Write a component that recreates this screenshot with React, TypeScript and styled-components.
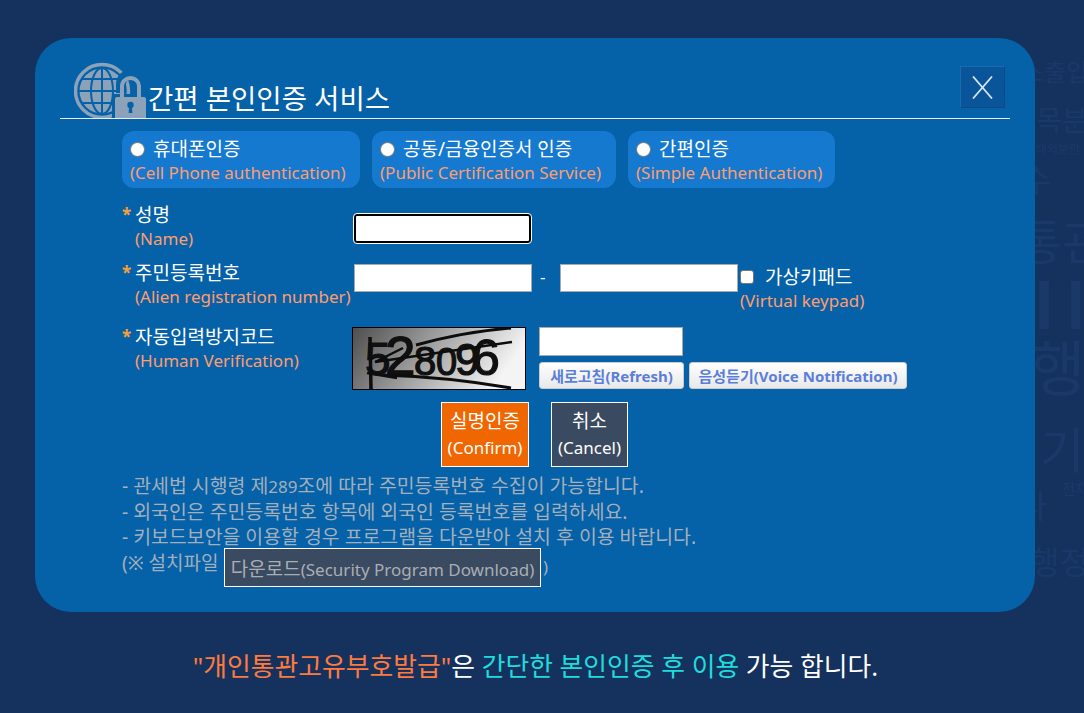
import React from "react";
import styled, { createGlobalStyle } from "styled-components";

const GlobalStyle = createGlobalStyle`
    html, body {
        margin: 0;
        padding: 0;
        height: 100%;
        background: #15325f;
        overflow: hidden;
        font-family: "Noto Sans", "Noto Sans CJK KR", sans-serif;
    }
`;

const ORANGE = "#ff9d6e";

const App: React.FC = () => (
    <>
        <GlobalStyle />
        <Page>
            <Watermark aria-hidden>
                <Faint size={24} top={60} left={1022}>스출입</Faint>
                <Faint size={28} top={106} left={1036}>목분</Faint>
                <Faint size={12} top={144} left={1036}>대외보안</Faint>
                <Faint size={32} top={164} left={1022}>수</Faint>
                <Faint size={48} top={218} left={1018}>통관</Faint>
                <Faint size={62} top={274} left={1035} bold>ll</Faint>
                <Faint size={60} top={338} left={1030}>행</Faint>
                <Faint size={48} top={426} left={1040}>기</Faint>
                <Faint size={14} top={482} left={1062}>전자</Faint>
                <Faint size={32} top={490} left={1018}>나</Faint>
                <Faint size={32} top={546} left={1030}>행정</Faint>
            </Watermark>
            <Modal>
                <Header>
                    <GlobeLock />
                    <Title>간편 본인인증 서비스</Title>
                    <CloseButton aria-label="close">
                        <svg width="21" height="23" viewBox="0 0 21 23">
                            <path d="M1 0.5 L20 22.5 M20 0.5 L1 22.5" stroke="#d6e2ee" strokeWidth="1.8" fill="none" />
                        </svg>
                    </CloseButton>
                </Header>
                <Tabs>
                    <Tab width={238}>
                        <TabTop><Radio type="radio" name="auth" /><Ko>휴대폰인증</Ko></TabTop>
                        <Eng>(Cell Phone authentication)</Eng>
                    </Tab>
                    <Tab width={244}>
                        <TabTop><Radio type="radio" name="auth" /><Ko>공동/금융인증서 인증</Ko></TabTop>
                        <Eng>(Public Certification Service)</Eng>
                    </Tab>
                    <Tab width={207}>
                        <TabTop><Radio type="radio" name="auth" /><Ko>간편인증</Ko></TabTop>
                        <Eng>(Simple Authentication)</Eng>
                    </Tab>
                </Tabs>
                <Form>
                    <Label>
                        <LabelTop><Star>*</Star><Ko>성명</Ko></LabelTop>
                        <Eng indent>(Name)</Eng>
                    </Label>
                    <NameCell>
                        <FocusInput />
                    </NameCell>
                    <Label>
                        <LabelTop><Star>*</Star><Ko>주민등록번호</Ko></LabelTop>
                        <Eng indent>(Alien registration number)</Eng>
                    </Label>
                    <IdCell>
                        <TextInput width={178} height={28} />
                        <Dash>-</Dash>
                        <TextInput width={178} height={28} />
                        <Keypad>
                            <KeypadTop><Check type="checkbox" /><Ko>가상키패드</Ko></KeypadTop>
                            <Eng>(Virtual keypad)</Eng>
                        </Keypad>
                    </IdCell>
                    <Label>
                        <LabelTop><Star>*</Star><Ko>자동입력방지코드</Ko></LabelTop>
                        <Eng indent>(Human Verification)</Eng>
                    </Label>
                    <CaptchaCell>
                        <Captcha />
                        <CaptchaSide>
                            <TextInput width={144} height={29} />
                            <SmallButtons>
                                <SmallButton width={145}>새로고침(Refresh)</SmallButton>
                                <SmallButton width={218}>음성듣기(Voice Notification)</SmallButton>
                            </SmallButtons>
                        </CaptchaSide>
                    </CaptchaCell>
                </Form>
                <Actions>
                    <ActionButton bg="#f06600" width={88}><Ko>실명인증</Ko><br />(Confirm)</ActionButton>
                    <ActionButton bg="#3a4a60" width={77}><Ko>취소</Ko><br />(Cancel)</ActionButton>
                </Actions>
                <Notes>
                    <Note>- 관세법 시행령 제<NoteNum>289</NoteNum>조에 따라 주민등록번호 수집이 가능합니다.</Note>
                    <Note>- 외국인은 주민등록번호 항목에 외국인 등록번호를 입력하세요.</Note>
                    <Note>- 키보드보안을 이용할 경우 프로그램을 다운받아 설치 후 이용 바랍니다.</Note>
                    <DownloadRow>
                        <DownloadLead>(※ 설치파일</DownloadLead>
                        <DownloadButton><Ko>다운로드</Ko>(Security Program Download)</DownloadButton>
                        <DownloadTail>)</DownloadTail>
                    </DownloadRow>
                </Notes>
            </Modal>
            <Footer>
                <FooterOrange>"개인통관고유부호발급"</FooterOrange>은{" "}
                <FooterCyan>간단한 본인인증 후 이용</FooterCyan> 가능 합니다.
            </Footer>
        </Page>
    </>
);

const GlobeLock: React.FC = () => (
    <IconWrap>
        <svg width="73" height="56" viewBox="0 0 73 56">
            <circle cx="28" cy="29" r="26.5" fill="none" stroke="#8ba2b8" strokeWidth="3.5" />
            <circle cx="28" cy="29" r="22.5" fill="#8ba2b8" />
            <g fill="none" stroke="#0561a8" strokeWidth="2">
                <ellipse cx="28" cy="29" rx="11" ry="23" />
                <path d="M28 5 V53 M4 29 H52 M8 17 H48 M8 41 H48" />
            </g>
            <path d="M47 31 V22 a9.5 9.5 0 0 1 19 0 V31" fill="none" stroke="#0561a8" strokeWidth="10" />
            <rect x="38" y="32" width="35" height="24" fill="#0561a8" />
            <path d="M48 36 V24 a8.5 8 0 0 1 17 0 V36" fill="none" stroke="#8ba2b8" strokeWidth="4" />
            <path d="M41 37 a2 2 0 0 1 2 -2 H70 a2 2 0 0 1 2 2 V56 H41 Z" fill="#8ba2b8" />
            <circle cx="56.5" cy="43" r="3.2" fill="#0561a8" />
            <path d="M55.2 44 H57.8 L58.4 51 H54.6 Z" fill="#0561a8" />
        </svg>
    </IconWrap>
);

const Captcha: React.FC = () => (
    <CaptchaBox>
        <svg width="172" height="61" viewBox="0 0 172 61">
            <defs>
                <linearGradient id="captcha-bg" x1="0" y1="0" x2="1" y2="0.25">
                    <stop offset="0" stopColor="#4e4e4e" />
                    <stop offset="1" stopColor="#f4f4f4" />
                </linearGradient>
            </defs>
            <rect width="172" height="61" fill="url(#captcha-bg)" />
            <text y="47" fontFamily="Liberation Sans, sans-serif" fill="#101010" stroke="#101010" strokeWidth="1.2">
                <tspan x="12" fontSize="46">5</tspan>
                <tspan x="32" fontSize="55">2</tspan>
                <tspan x="61" fontSize="40">8</tspan>
                <tspan x="83" fontSize="38">0</tspan>
                <tspan x="102" fontSize="44">9</tspan>
                <tspan x="119" fontSize="50">6</tspan>
            </text>
            <g stroke="#0d0d0d" fill="none" strokeWidth="2.5">
                <path d="M17 9 L18 61" strokeWidth="3.5" />
                <path d="M22 34 L159 14" />
                <path d="M63 17 Q110 4 158 0" strokeWidth="3" />
                <path d="M30 47 Q95 49 158 60" strokeWidth="3" />
                <path d="M14 45 L44 50" />
                <path d="M22 34 L50 20" />
            </g>
        </svg>
    </CaptchaBox>
);

const Page = styled.div`
    position: relative;
    width: 1084px;
    height: 713px;
    padding: 38px 49px 0 35px;
    box-sizing: border-box;
    overflow: hidden;
    background: #15325f;
`;

const Watermark = styled.div`
    position: absolute;
    inset: 0;
    filter: blur(0.6px);
`;

const Faint = styled.span<{ size: number; top: number; left: number; bold?: boolean }>`
    position: absolute;
    top: ${({ top }) => top}px;
    left: ${({ left }) => left}px;
    font-size: ${({ size }) => size}px;
    font-weight: ${({ bold }) => (bold ? 700 : 400)};
    letter-spacing: ${({ bold }) => (bold ? "13px" : "0")};
    line-height: 1;
    white-space: nowrap;
    color: #1b3968;
`;

const Modal = styled.div`
    position: relative;
    box-sizing: border-box;
    width: 1000px;
    height: 574px;
    padding: 0 25px;
    border-radius: 36px;
    background: #0561a8;
    color: #fff;
    font-size: 17px;
    line-height: 24px;
`;

const Ko = styled.span`
    font-size: 19px;
`;

const Header = styled.div`
    position: relative;
    display: flex;
    align-items: flex-end;
    height: 80px;
    border-bottom: 1px solid #e8eef4;
`;

const IconWrap = styled.div`
    display: flex;
    margin: 0 1px 0 14px;
    width: 73px;
    height: 56px;
`;

const Title = styled.h1`
    margin: 0;
    font-size: 27.5px;
    line-height: 38px;
    font-weight: 400;
    color: #fff;
    white-space: nowrap;
`;

const CloseButton = styled.button`
    position: absolute;
    right: 5px;
    top: 28px;
    display: flex;
    align-items: center;
    justify-content: center;
    box-sizing: border-box;
    width: 45px;
    height: 42px;
    padding: 0;
    background: #0a5599;
    border: 1px solid;
    border-color: #1a6cb0 #0a4a86 #0a4a86 #1a6cb0;
`;

const Tabs = styled.div`
    display: flex;
    gap: 12px;
    margin: 12px 0 0 62px;
`;

const Tab = styled.div<{ width: number }>`
    display: flex;
    flex-direction: column;
    box-sizing: border-box;
    width: ${({ width }) => width}px;
    height: 57px;
    padding: 6px 0 0 8px;
    border-radius: 12px;
    background: #1479cf;
    white-space: nowrap;
`;

const TabTop = styled.div`
    display: flex;
    align-items: center;
    gap: 8px;
`;

const Radio = styled.input`
    appearance: none;
    box-sizing: border-box;
    flex: none;
    width: 15px;
    height: 15px;
    margin: 0;
    background: #fff;
    border: 1px solid #767676;
    border-radius: 50%;
`;

const Eng = styled.div<{ indent?: boolean }>`
    color: ${ORANGE};
    white-space: nowrap;
    margin-left: ${({ indent }) => (indent ? "13px" : "0")};
`;

const Form = styled.div`
    display: grid;
    grid-template-columns: 232px 1fr;
    grid-template-rows: 58px 64px 77px;
    margin: 15px 0 0 62px;
`;

const Label = styled.div`
    display: flex;
    flex-direction: column;
    white-space: nowrap;
`;

const LabelTop = styled.div`
    display: flex;
    align-items: center;
    height: 24px;
`;

const Star = styled.span`
    width: 13px;
    color: #f5a03c;
    font-weight: 700;
`;

const NameCell = styled.div`
    display: flex;
    align-items: flex-start;
    padding-top: 11px;
`;

const IdCell = styled.div`
    display: flex;
    align-items: flex-start;
    padding-top: 3px;
`;

const TextInput = styled.input<{ width: number; height: number }>`
    box-sizing: border-box;
    width: ${({ width }) => width}px;
    height: ${({ height }) => height}px;
    padding: 0;
    border: 1px solid #a9a9a9;
    background: #fff;
`;

const FocusInput = styled.input`
    box-sizing: border-box;
    width: 177px;
    height: 29px;
    padding: 0;
    background: #fff;
    border: 2px solid #000;
    border-radius: 3px;
    outline: 1px solid #fff;
`;

const Dash = styled.span`
    box-sizing: border-box;
    width: 28px;
    padding-left: 8px;
    line-height: 26px;
`;

const Keypad = styled.div`
    margin: 1px 0 0 2px;
`;

const KeypadTop = styled.div`
    display: flex;
    align-items: center;
    gap: 11px;
`;

const Check = styled.input`
    appearance: none;
    box-sizing: border-box;
    flex: none;
    width: 14px;
    height: 14px;
    margin: 0;
    background: #fff;
    border: 1px solid #767676;
    border-radius: 3px;
`;

const CaptchaCell = styled.div`
    display: flex;
    margin-left: -2px;
    padding-top: 2px;
    gap: 13px;
`;

const CaptchaBox = styled.div`
    display: flex;
    align-self: flex-start;
    border: 1px solid #000;
    width: 172px;
    height: 61px;
    overflow: hidden;
`;

const CaptchaSide = styled.div`
    display: flex;
    flex-direction: column;
    gap: 6px;
`;

const SmallButtons = styled.div`
    display: flex;
    gap: 5px;
`;

const SmallButton = styled.button<{ width: number }>`
    box-sizing: border-box;
    width: ${({ width }) => width}px;
    height: 27px;
    padding: 0;
    border: 1px solid #ccc;
    border-radius: 3px;
    background: linear-gradient(#ffffff, #e8e8e8);
    color: #5b7fd8;
    font-family: inherit;
    font-size: 15px;
    font-weight: 700;
    white-space: nowrap;
`;

const Actions = styled.div`
    display: flex;
    gap: 22px;
    margin-left: 381px;
`;

const ActionButton = styled.button<{ bg: string; width: number }>`
    box-sizing: border-box;
    width: ${({ width }) => width}px;
    height: 65px;
    padding: 0;
    border: 1px solid #fff;
    background: ${({ bg }) => bg};
    color: #fff;
    font-family: inherit;
    font-size: 17px;
    line-height: 26px;
`;

const Notes = styled.div`
    margin: 6px 0 0 62px;
    color: #a3afbb;
    font-size: 19.4px;
    line-height: 25px;
`;

const Note = styled.div`
    white-space: nowrap;
`;

const NoteNum = styled.span`
    font-size: 17px;
`;

const DownloadRow = styled.div`
    display: flex;
    align-items: flex-start;
    gap: 6px;
    margin-top: -1px;
    white-space: nowrap;
`;

const DownloadLead = styled.span`
    width: 96px;
    margin-top: 3px;
    font-size: 19px;
`;

const DownloadTail = styled.span`
    margin: 6px 0 0 -4px;
    font-size: 17px;
`;

const DownloadButton = styled.button`
    box-sizing: border-box;
    width: 317px;
    height: 39px;
    padding: 0;
    border: 1px solid #fff;
    background: #3a4a60;
    color: #a9aeb4;
    font-family: inherit;
    font-size: 17px;
    white-space: nowrap;
`;

const Footer = styled.div`
    margin-top: 36px;
    padding-left: 1px;
    text-align: center;
    font-size: 25.8px;
    line-height: 36px;
    color: #fff;
    white-space: nowrap;
`;

const FooterOrange = styled.span`
    color: #ff7a3c;
`;

const FooterCyan = styled.span`
    color: #1fdcdc;
`;

export default App;
